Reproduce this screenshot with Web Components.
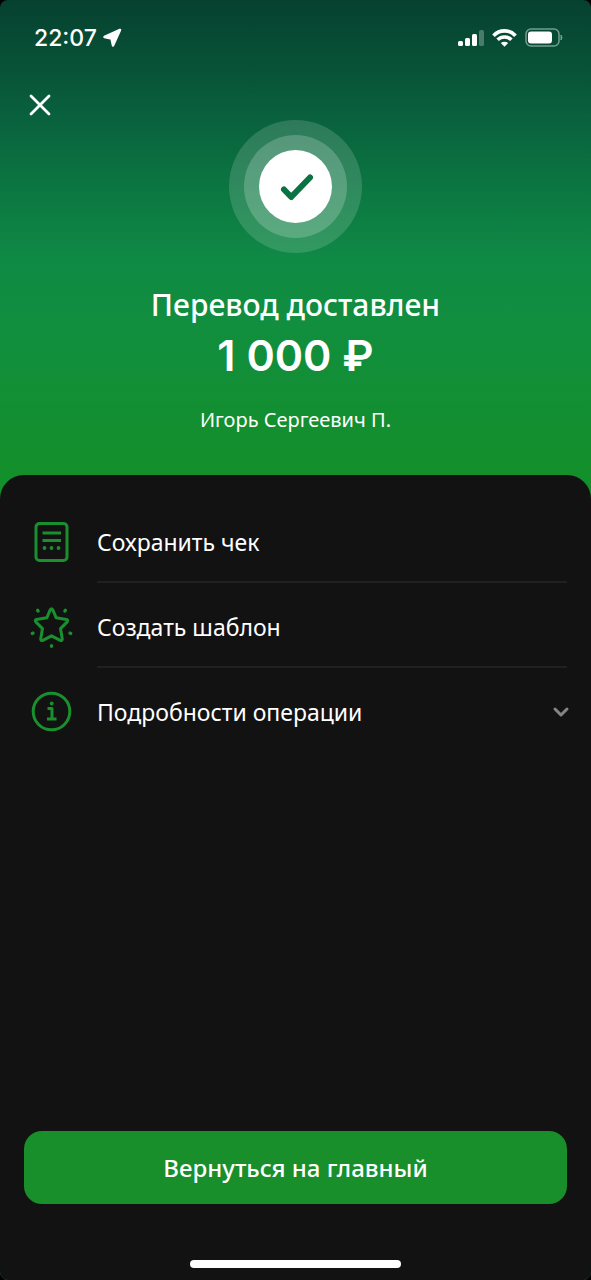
<!DOCTYPE html>
<html lang="ru">
<head>
<meta charset="utf-8">
<meta name="viewport" content="width=device-width, initial-scale=1">
<title>Перевод доставлен</title>
<style>
html { background: #000; }
body { margin: 0; font-family: "Noto Sans", "Open Sans", sans-serif; color: #fff; }
</style>
</head>
<body>
<transfer-screen>
  <status-bar slot="status" time="22:07"></status-bar>
  <transfer-hero slot="hero">
    <span slot="title">Перевод доставлен</span>
    <span slot="amount">1 000 ₽</span>
    <span slot="recipient">Игорь Сергеевич П.</span>
  </transfer-hero>
  <action-row icon="receipt">Сохранить чек</action-row>
  <action-row icon="star">Создать шаблон</action-row>
  <action-row icon="info" expandable>Подробности операции</action-row>
  <primary-button slot="footer">Вернуться на главный</primary-button>
</transfer-screen>

<script>
class ShadowElement extends HTMLElement {
  connectedCallback() {
    if (this.shadowRoot) return;
    const template = document.createElement('template');
    template.innerHTML = this.view();
    this.attachShadow({ mode: 'open' }).append(template.content.cloneNode(true));
  }
}

customElements.define('transfer-screen', class extends ShadowElement {
  view() {
    return `<style>
      :host { display: flex; flex-direction: column; min-height: 100vh; border-radius: 8px; overflow: hidden;
        background: linear-gradient(#06412f 0, #085338 70px, #09623e 120px, #0b7441 180px, #0f8a45 260px, #118e3f 320px, #138f2e 440px, #138f2b 500px) #111; }
      main { flex: 1; display: flex; flex-direction: column; background: #121212; border-radius: 24px 24px 0 0; padding: 24px 24px 0; }
      .actions { flex: 1; }
      footer { padding-bottom: 12px; display: flex; flex-direction: column; gap: 56px; }
      .home { width: 211px; height: 8px; border-radius: 4px; background: #fff; align-self: center; }
    </style>
    <slot name="status"></slot>
    <slot name="hero"></slot>
    <main>
      <div class="actions"><slot></slot></div>
      <footer><slot name="footer"></slot><div class="home"></div></footer>
    </main>`;
  }
});

customElements.define('status-bar', class extends ShadowElement {
  view() {
    return `<style>
      :host { display: flex; align-items: center; justify-content: space-between; height: 76px; padding: 0 27px 0 34px; }
      div { display: flex; align-items: center; }
      .clock { gap: 5px; font: 500 23px/32px Inter, sans-serif; }
      .system { gap: 8px; }
      svg { display: block; }
    </style>
    <div class="clock"><time>${this.getAttribute('time')}</time>
      <svg width="20" height="20" viewBox="0 0 20 20" aria-hidden="true"><path d="M18 2 2.500 9 9.500 10.500 11 17.500Z" fill="#fff" stroke="#fff" stroke-width="2.500" stroke-linejoin="round"/></svg>
    </div>
    <div class="system">
      <svg width="26" height="18" viewBox="0 0 26 18" fill="#fff" role="img" aria-label="Сигнал сети"><rect x="0" y="12" width="5" height="5" rx="1.500"/><rect x="7" y="9" width="5" height="8" rx="1.500"/><rect x="14" y="5" width="5" height="12" rx="1.500"/><rect x="21" y="1" width="5" height="16" rx="1.500" opacity=".27"/></svg>
      <svg width="25" height="19" viewBox="0 0 25 19" fill="none" stroke="#fff" stroke-width="3.600" role="img" aria-label="Wi-Fi"><path d="M1.500 6.700C7.500 .2 17.500 .2 23.500 6.700M5.600 10.800C9.400 7 15.600 7 19.400 10.800"/><path d="M8.800 14.100Q12.500 11.200 16.200 14.100L12.500 17.800Z" fill="#fff" stroke="none"/></svg>
      <svg width="39" height="20" viewBox="0 0 39 20" role="img" aria-label="Заряд батареи"><rect x="1" y="1" width="33" height="17" rx="5" fill="none" stroke="#fff" stroke-width="1.500" opacity=".45"/><rect x="3" y="3.500" width="24" height="12" rx="3" fill="#fff"/><path d="M36 7v5q2-2.500 0-5Z" fill="#fff" stroke="#fff" opacity=".45"/></svg>
    </div>`;
  }
});

customElements.define('transfer-hero', class extends ShadowElement {
  view() {
    return `<style>
      :host { display: grid; grid-template-columns: 80px 1fr 80px; text-align: center; padding-bottom: 40px; }
      button { appearance: none; border: 0; padding: 0; margin: 9px 0 0 20px; width: 40px; height: 40px; background: none; color: inherit; cursor: pointer; }
      button svg { display: block; margin: auto; }
      .badge { display: block; justify-self: center; margin-top: 44px; }
      header { grid-column: 1 / -1; padding-top: 32px; }
      h1 { margin: 0; font-size: 30px; line-height: 40px; font-weight: 500; }
      .amount { margin: 0; font: 600 43px/60px Inter, "Noto Sans", sans-serif; }
      .recipient { margin: 20px 0 0; font-size: 20px; line-height: 30px; }
    </style>
    <button type="button" aria-label="Закрыть"><svg width="22" height="22" viewBox="0 0 22 22"><path d="m2 2 18 18M20 2 2 20" stroke="#fff" stroke-width="2.800" stroke-linecap="round"/></svg></button>
    <svg class="badge" width="133" height="133" viewBox="0 0 133 133" aria-hidden="true">
      <circle cx="66.500" cy="66.500" r="66.500" fill="#fff" opacity=".15"/><circle cx="66.500" cy="66.500" r="51.500" fill="#fff" opacity=".2"/><circle cx="66.500" cy="66.500" r="36.500" fill="#fff"/>
      <path d="M55 69.500 62.200 77 81 57.500" fill="none" stroke="#0b7243" stroke-width="6" stroke-linecap="round" stroke-linejoin="round"/>
    </svg>
    <header>
      <h1><slot name="title"></slot></h1>
      <p class="amount"><slot name="amount"></slot></p>
      <p class="recipient"><slot name="recipient"></slot></p>
    </header>`;
  }
});

const ICONS = {
  receipt: '<rect x="6" y="3.500" width="31" height="37" rx="3.500"/><path d="M12.500 13h18.500M12.500 20.500h18.500"/><g fill="currentColor" stroke="none"><circle cx="14.500" cy="28" r="1.900"/><circle cx="21.500" cy="28" r="1.900"/><circle cx="28.500" cy="28" r="1.900"/></g>',
  star: '<path d="M20.300 4.700Q21.500 2.700 22.700 4.700L26.200 12.800 36.500 14.500Q38.500 15.300 37.200 16.900L30.500 23.600 32.300 34Q32.200 36.200 30.200 35.400L21.500 30.800 12.800 35.400Q10.800 36.200 10.700 34L12.500 23.600 5.800 16.900Q4.500 15.300 6.500 14.500L16.800 12.800Z"/><path stroke-width="3.400" stroke-linecap="round" d="m7.600 5.300.5.700m27.300-.7-.5.700M3 28.200l-.7.200m37.700-.2.700.2M21.500 40.700v.6"/>',
  info: '<circle cx="21.500" cy="21.500" r="18.300"/><path d="M17.500 18.500h4.500v10.500M17 29h9.500"/><circle cx="21.700" cy="13.500" r="1.900" fill="currentColor" stroke="none"/>'
};

customElements.define('action-row', class extends ShadowElement {
  view() {
    const last = this.hasAttribute('expandable');
    return `<style>
      :host { display: block; }
      button { appearance: none; width: 100%; height: 85px; display: flex; gap: 24px; padding: 0 0 0 6px; border: 0; background: none; color: #fff; font: 400 23px/32px "Noto Sans", "Open Sans", sans-serif; text-align: left; cursor: pointer; }
      .icon { color: #198f2e; flex: none; margin-top: 21px; }
      .label { flex: 1; box-sizing: border-box; height: 84px; padding-top: 4px; display: flex; align-items: center; justify-content: space-between; border-bottom: 2px solid ${last ? 'transparent' : '#202020'}; }
      .chevron { margin-right: -3px; }
    </style>
    <button type="button" ${last ? 'aria-expanded="false"' : ''}>
      <svg class="icon" width="43" height="43" viewBox="0 0 43 43" fill="none" stroke="currentColor" stroke-width="3" stroke-linejoin="round" aria-hidden="true">${ICONS[this.getAttribute('icon')]}</svg>
      <span class="label"><slot></slot>${last ? '<svg class="chevron" width="18" height="12" viewBox="0 0 18 12" aria-hidden="true"><path d="m3 3 6 6 6-6" fill="none" stroke="#858585" stroke-width="3" stroke-linecap="round" stroke-linejoin="round"/></svg>' : ''}</span>
    </button>`;
  }
});

customElements.define('primary-button', class extends ShadowElement {
  view() {
    return `<style>
      :host { display: block; }
      button { appearance: none; display: block; width: 100%; height: 73px; border: 0; border-radius: 18px; background: #198f2c; color: #fff; font: 500 24px/32px "Noto Sans", "Open Sans", sans-serif; cursor: pointer; }
    </style>
    <button type="button"><slot></slot></button>`;
  }
});
</script>
</body>
</html>
